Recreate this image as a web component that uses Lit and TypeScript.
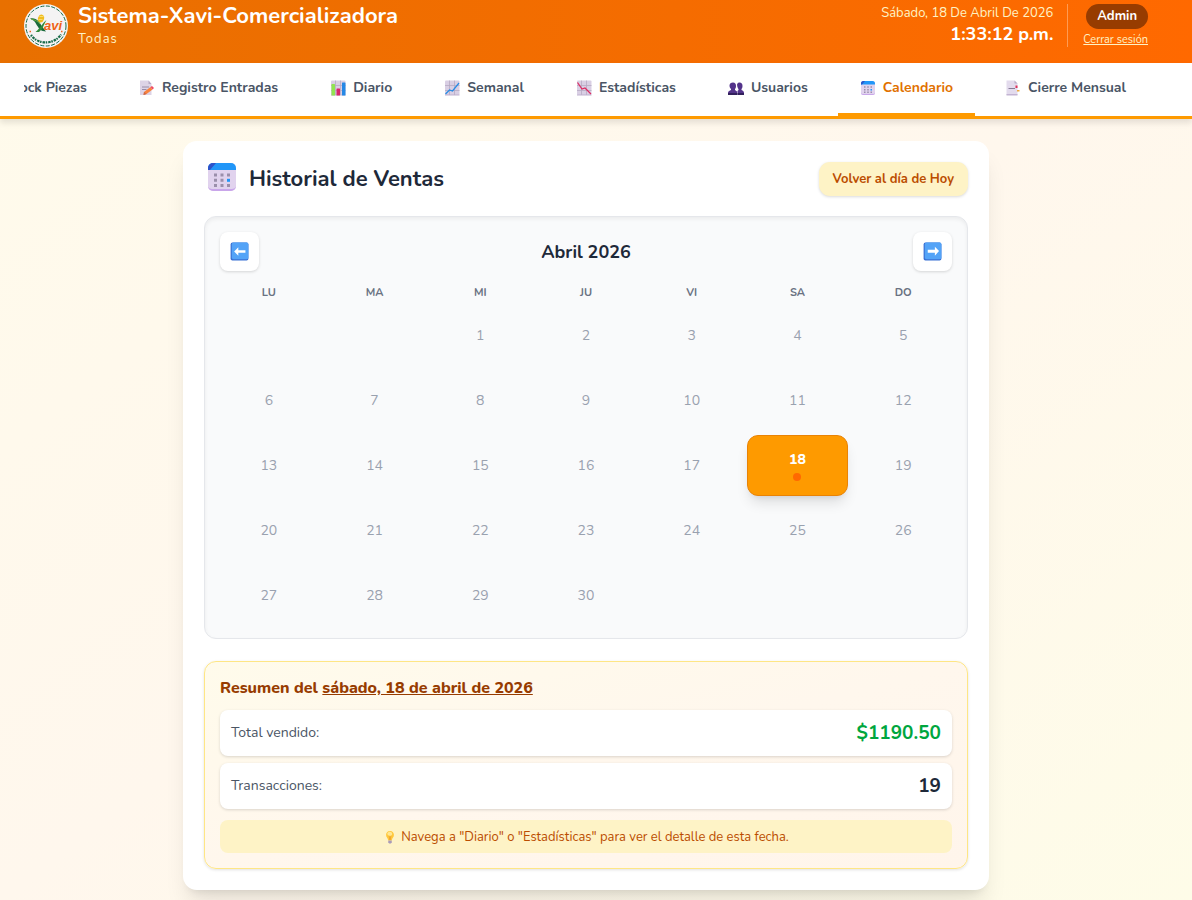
import { LitElement, html, css, svg, nothing } from "lit";
import { customElement, property, state } from "lit/decorators.js";
import { classMap } from "lit/directives/class-map.js";

const calendarIcon = svg`
  <rect x="2" y="2" width="28" height="28" rx="5" fill="#e1d3ee"/>
  <path d="M2 24v1a5 5 0 0 0 5 5h18a5 5 0 0 0 5-5v-1c0 3-2 4-5 4H7c-3 0-5-1-5-4Z" fill="#c9a6ea"/>
  <path d="M7 2h18a5 5 0 0 1 5 5v2H2V7a5 5 0 0 1 5-5Z" fill="#2196f8"/>
  <path d="M7 2h3L4 9H2V7a5 5 0 0 1 5-5Z" fill="#2d53c9"/>
  <g fill="#9b8fab">
    <path d="M8 12.500h3v3H8zM14.500 12.500h3v3h-3zM21 12.500h3v3h-3zM8 17.800h3v3H8zM14.500 17.800h3v3h-3zM8 23h3v3H8zM14.500 23h3v3h-3zM21 23h3v3h-3z"/>
  </g>
  <path d="M21 17.800h3v3h-3z" fill="#2196f8"/>`;

const gridPaper = svg`
  <rect x="2" y="1" width="29" height="29" rx="2" fill="#d9cfe4"/>
  <path d="M2 11h29M2 21h29M11 1v29M21 1v29" stroke="#b4a8c2" stroke-width="1.500"/>
  <path d="M2 29h29v2H2z" fill="#bfb0cf"/>`;

const icons: Record<string, unknown> = {
  calendar: calendarIcon,
  box: svg`<path d="M2 9 16 2l14 7v15l-14 7L2 24Z" fill="#d9a066"/><path d="m2 9 14 7 14-7M16 16v15" stroke="#a8703a" stroke-width="2" fill="none"/>`,
  memo: svg`
    <path d="M2 1h17l6 7v22H2Z" fill="#ddd3e6"/>
    <path d="M19 1v7h6Z" fill="#b5a9c3"/>
    <path d="M6 14h14M6 19h9" stroke="#988ca8" stroke-width="2"/>
    <path d="m10 24 13-10 4 5-12 9-6 2Z" fill="#f9823e"/>
    <path d="m23 14 3-2 4 4-3 3Z" fill="#ef4963"/>
    <path d="m10 24 5 4-6 2Z" fill="#c9674a"/>`,
  bars: svg`${gridPaper}
    <rect x="3" y="8" width="7" height="23" rx="1" fill="#91e451"/>
    <rect x="13" y="17" width="7" height="14" rx="1" fill="#d9246b"/>
    <rect x="24" y="5" width="7" height="26" rx="1" fill="#2588e5"/>`,
  up: svg`${gridPaper}<path d="m3 28 8-8 6 2L30 6" fill="none" stroke="#278ce5" stroke-width="2.500"/>`,
  down: svg`${gridPaper}<path d="m3 5 9 13 6-2 12 12" fill="none" stroke="#dc2b62" stroke-width="2.500"/>`,
  people: svg`
    <g fill="#53338a">
      <path d="M10 5c4 0 6 3 6 7 0 3-1 5-2 6v2l4 3v7H0v-4c0-4 3-4 6-6v-2c-2-2-3-4-3-7 0-4 3-6 7-6Z"/>
      <path d="M23 5c4 0 6 3 6 7 0 3-1 5-2 6v2c3 2 5 2 5 6v4H19v-8l2-2v-2c-2-2-4-10-2-11 1-1 2-2 4-2Z"/>
    </g>
    <path d="M0 26h18v4H0zM19 26h13v4H19z" fill="#32205c"/>`,
  bookmark: svg`
    <path d="M3 1h16l6 6v23H3Z" fill="#e3dbed"/>
    <path d="M19 1v6h6Z" fill="#b8acc5"/>
    <path d="M3 28h22v3H3z" fill="#c3b4d3"/>
    <path d="M7 17h13" stroke="#877b97" stroke-width="2"/>
    <path d="M21 11h4v5h-4z" fill="#df315b"/>
    <path d="M24 20h5v3h-5z" fill="#eca83d"/>`,
  left: svg`
    <rect x="1" y="1" width="30" height="30" rx="3" fill="#3970d4"/>
    <rect x="3" y="1" width="28" height="28" rx="3" fill="#53a3f7"/>
    <path d="m7 16 7-7v5h12v4H14v5Z" fill="#fff"/>`,
  right: svg`
    <rect x="1" y="1" width="30" height="30" rx="3" fill="#3970d4"/>
    <rect x="3" y="1" width="28" height="28" rx="3" fill="#53a3f7"/>
    <path d="m27 15-7-7v5H8v5h12v5Z" fill="#fff"/>`,
  bulb: svg`
    <path d="M16 2c6 0 9 4 9 9 0 6-4 7-5 13h-8c-1-6-5-7-5-13 0-5 3-9 9-9Z" fill="#ffc83c"/>
    <path d="M12 5c4-2 9 0 9 4s-6 5-9 3-3-5 0-7Z" fill="#ffe792"/>
    <path d="m14 14 2 9 2-9" fill="none" stroke="#e8932e" stroke-width="1.500"/>
    <path d="M12 24h8v4l-2 3h-4l-2-3Z" fill="#a99bb9"/>`,
};

@customElement("x-icon")
class XIcon extends LitElement {
  @property() name = "calendar";
  static styles = css`
    :host { display: inline-flex; width: 16px; height: 16px; flex: none; }
    svg { width: 100%; height: 100%; }
  `;
  render() {
    return html`<svg viewBox="0 0 32 32" aria-hidden="true">${icons[this.name] ?? nothing}</svg>`;
  }
}

@customElement("brand-logo")
class BrandLogo extends LitElement {
  static styles = css`
    :host { display: block; width: 44px; height: 44px; flex: none; }
    svg { display: block; width: 100%; height: 100%; }
    .word { font: italic 700 13px "Liberation Sans", sans-serif; fill: #ef6318; }
  `;
  render() {
    return html`<svg viewBox="0 0 44 44" role="img" aria-label="Xavi">
      <circle cx="22" cy="22" r="22" fill="#f4f3f4"/>
      <circle cx="22" cy="22" r="20" fill="none" stroke="#176b48" stroke-width="1" stroke-dasharray="4 1.500"/>
      <path d="M7 31c7 10 23 10 30-.500" fill="none" stroke="#176b48" stroke-width="2.200" stroke-dasharray="1.500 1 2.500 .7"/>
      <path d="M5.500 27.500H7M37 27.500h1.500" stroke="#ef6318" stroke-width="1.500"/>
      <path d="M6 14.500c7-1 9 3 12 8l4 5c-5 0-7-3-9-6-2-4-3-5-7-7Z" fill="#1b6a3c"/>
      <path d="M22.500 16c-4 3-6 8-11 12h3.500c4-3 5-8 7.500-12Z" fill="#2f8b3b"/>
      <path d="M7 15c4 1 7 2 9 5" fill="none" stroke="#69a83b" stroke-width="1"/>
      <ellipse cx="17" cy="14.500" rx="3" ry="4" fill="#f0bd1f" transform="rotate(18 17 14.500)"/>
      <path d="M15.500 12.500h4M14.500 15.500h4" stroke="#fbe283" stroke-width=".8"/>
      <text class="word" x="20" y="26">avi</text>
    </svg>`;
  }
}

interface Tab { icon: string; label: string; }

const TABS: Tab[] = [
  { icon: "box", label: "Stock Piezas" },
  { icon: "memo", label: "Registro Entradas" },
  { icon: "bars", label: "Diario" },
  { icon: "up", label: "Semanal" },
  { icon: "down", label: "Estadísticas" },
  { icon: "people", label: "Usuarios" },
  { icon: "calendar", label: "Calendario" },
  { icon: "bookmark", label: "Cierre Mensual" },
];

const WEEKDAYS = ["LU", "MA", "MI", "JU", "VI", "SA", "DO"];
const DAYS = 30;

@customElement("app-root")
class AppRoot extends LitElement {
  @state() private active = "Calendario";
  @state() private selected = 18;

  static styles = css`
    :host {
      display: block;
      min-height: 100vh;
      box-sizing: border-box;
      font-family: Nunito, Lato, sans-serif;
      font-size: 14px;
      line-height: 22px;
      color: #1e2939;
      background: linear-gradient(to bottom right, #fffbeb, #fff7ed 50%, #fefce8);
      overflow: hidden;
    }
    *, *::before, *::after { box-sizing: border-box; }
    h1, h2, h3, p, dl, dd, dt { margin: 0; }
    button { font: inherit; color: inherit; border: 0; background: none; padding: 0; cursor: pointer; }

    .top {
      display: flex;
      justify-content: space-between;
      align-items: flex-start;
      padding: 4px 44px 12px 24px;
      color: #fff;
      background: linear-gradient(90deg, #e87000, #ff6900);
    }
    .brand { display: flex; align-items: flex-start; gap: 10px; }
    .brand h1 { font-size: 22px; line-height: 24px; font-weight: 700; }
    .brand p { margin-top: 1px; font-size: 13px; line-height: 20px; letter-spacing: 1px; color: #fef3c6; }
    .session { display: flex; }
    .clock { text-align: right; padding-right: 14px; border-right: 1px solid #ff9b52; height: 43px; }
    .date { font-size: 13px; line-height: 18px; color: #fef3c6; }
    .time { font-size: 18px; line-height: 24px; font-weight: 700; }
    .user { display: flex; flex-direction: column; align-items: flex-end; padding-left: 15px; }
    .role { padding: 0 11px; border-radius: 13px; background: #973c00; font-size: 13px; line-height: 25px; font-weight: 700; }
    .logout { color: #fef3c6; font-size: 11px; line-height: 22px; }

    .nav {
      background: #fff;
      border-bottom: 3px solid #fe9a00;
      padding: 0 44px 0 24px;
      box-shadow: 0 4px 6px rgba(0, 0, 0, 0.1);
    }
    .tabs { display: flex; justify-content: flex-end; gap: 8px; overflow: hidden; }
    .tab {
      flex: none;
      display: flex;
      align-items: center;
      gap: 7px;
      height: 53px;
      padding: 0 22px;
      border-bottom: 3px solid transparent;
      font-size: 14px;
      font-weight: 700;
      color: #4a5565;
    }
    .tab.active { color: #e17100; border-color: #fe9a00; }

    main { padding: 22px 20px 10px 0; }
    .card {
      max-width: 806px;
      margin: 0 auto;
      padding: 21px;
      border-radius: 14px;
      background: #fff;
      box-shadow: 0 18px 23px -5px rgba(0, 0, 0, 0.1), 0 7px 9px -6px rgba(0, 0, 0, 0.1);
    }
    .head { display: flex; justify-content: space-between; align-items: center; height: 34px; margin-bottom: 20px; }
    .title { display: flex; align-items: center; gap: 11px; font-size: 22px; line-height: 32px; font-weight: 700; }
    .title x-icon { width: 32px; height: 32px; margin: 0 0 4px 2px; }
    .today {
      height: 34px;
      padding: 0 14px;
      border-radius: 11px;
      background: #fef3c6;
      color: #bb4d00;
      font-size: 13px;
      font-weight: 700;
      box-shadow: 0 1px 3px rgba(0, 0, 0, 0.15);
    }

    .calendar {
      padding: 15px 15px 12px;
      border: 1px solid #e5e7eb;
      border-radius: 12px;
      background: #f9fafb;
      box-shadow: inset 0 2px 4px rgba(0, 0, 0, 0.06);
    }
    .month { display: flex; justify-content: space-between; align-items: center; }
    .month h3 { font-size: 18px; line-height: 26px; font-weight: 700; }
    .arrow {
      display: grid;
      place-items: center;
      width: 39px;
      height: 39px;
      border-radius: 8px;
      background: #fff;
      box-shadow: 0 1px 3px rgba(0, 0, 0, 0.15);
    }
    .arrow x-icon { width: 19px; height: 19px; }
    .week, .days { display: grid; grid-template-columns: repeat(7, 1fr); gap: 4px; text-align: center; margin: 0 -2px; }
    .week { margin-top: 11px; margin-bottom: 1px; font-size: 11px; line-height: 22px; font-weight: 700; color: #6a7282; }
    .day {
      display: flex;
      flex-direction: column;
      align-items: center;
      justify-content: center;
      height: 61px;
      border: 1px solid transparent;
      border-radius: 11px;
      font-size: 14px;
      line-height: 20px;
      color: #99a1af;
    }
    .day:first-child { grid-column-start: 3; }
    .day.selected {
      background: #fe9a00;
      border-color: #e98305;
      color: #fff;
      font-weight: 800;
      line-height: 18px;
      gap: 4px;
      box-shadow: 0 9px 14px -3px rgba(0, 0, 0, 0.12), 0 4px 6px -4px rgba(0, 0, 0, 0.1);
    }
    .dot { width: 8px; height: 8px; border-radius: 50%; background: #ff6900; }

    .summary {
      margin-top: 22px;
      padding: 15px;
      border: 1px solid #fee685;
      border-radius: 12px;
      background: linear-gradient(to bottom right, #fffbeb, #fff7ed 50%, #fff5eb);
      box-shadow: 0 1px 3px rgba(0, 0, 0, 0.12);
    }
    .summary h3 { font-size: 16px; line-height: 22px; font-weight: 800; color: #973c00; margin-bottom: 11px; }
    .rows { display: grid; gap: 7px; }
    .row {
      display: flex;
      justify-content: space-between;
      align-items: center;
      height: 46px;
      padding: 0 11px;
      border-radius: 8px;
      background: #fff;
      box-shadow: 0 1px 3px rgba(0, 0, 0, 0.15);
    }
    .row dt { color: #4a5565; }
    .row dd { font-size: 19px; font-weight: 700; }
    .row .money { color: #00a63e; }
    .hint {
      display: flex;
      justify-content: center;
      align-items: center;
      gap: 4px;
      height: 33px;
      margin-top: 11px;
      border-radius: 8px;
      background: #fef3c6;
      color: #bb4d00;
      font-size: 13px;
    }
    .hint x-icon { width: 14px; height: 14px; }
  `;

  render() {
    return html`
      <header class="top">
        <div class="brand">
          <brand-logo></brand-logo>
          <div>
            <h1>Sistema-Xavi-Comercializadora</h1>
            <p>Todas</p>
          </div>
        </div>
        <div class="session">
          <div class="clock">
            <div class="date">Sábado, 18 De Abril De 2026</div>
            <div class="time">1:33:12 p.m.</div>
          </div>
          <div class="user">
            <span class="role">Admin</span>
            <a class="logout" href="#">Cerrar sesión</a>
          </div>
        </div>
      </header>
      <nav class="nav">
        <div class="tabs">
          ${TABS.map((t) => html`
            <button class=${classMap({ tab: true, active: t.label === this.active })}
              @click=${() => (this.active = t.label)}>
              <x-icon name=${t.icon}></x-icon><span>${t.label}</span>
            </button>`)}
        </div>
      </nav>
      <main>
        <section class="card">
          <div class="head">
            <h2 class="title"><x-icon name="calendar"></x-icon>Historial de Ventas</h2>
            <button class="today" @click=${() => (this.selected = 18)}>Volver al día de Hoy</button>
          </div>
          <div class="calendar">
            <div class="month">
              <button class="arrow" aria-label="Mes anterior"><x-icon name="left"></x-icon></button>
              <h3>Abril 2026</h3>
              <button class="arrow" aria-label="Mes siguiente"><x-icon name="right"></x-icon></button>
            </div>
            <div class="week">${WEEKDAYS.map((d) => html`<span>${d}</span>`)}</div>
            <div class="days">
              ${Array.from({ length: DAYS }, (_, i) => i + 1).map((d) => html`
                <button class=${classMap({ day: true, selected: d === this.selected })}
                  @click=${() => (this.selected = d)}>
                  <span>${d}</span>${d === this.selected ? html`<span class="dot"></span>` : nothing}
                </button>`)}
            </div>
          </div>
          <section class="summary">
            <h3>Resumen del <u>sábado, 18 de abril de 2026</u></h3>
            <dl class="rows">
              <div class="row"><dt>Total vendido:</dt><dd class="money">$1190.50</dd></div>
              <div class="row"><dt>Transacciones:</dt><dd>19</dd></div>
            </dl>
            <p class="hint"><x-icon name="bulb"></x-icon><span>Navega a "Diario" o "Estadísticas" para ver el detalle de esta fecha.</span></p>
          </section>
        </section>
      </main>
    `;
  }
}
